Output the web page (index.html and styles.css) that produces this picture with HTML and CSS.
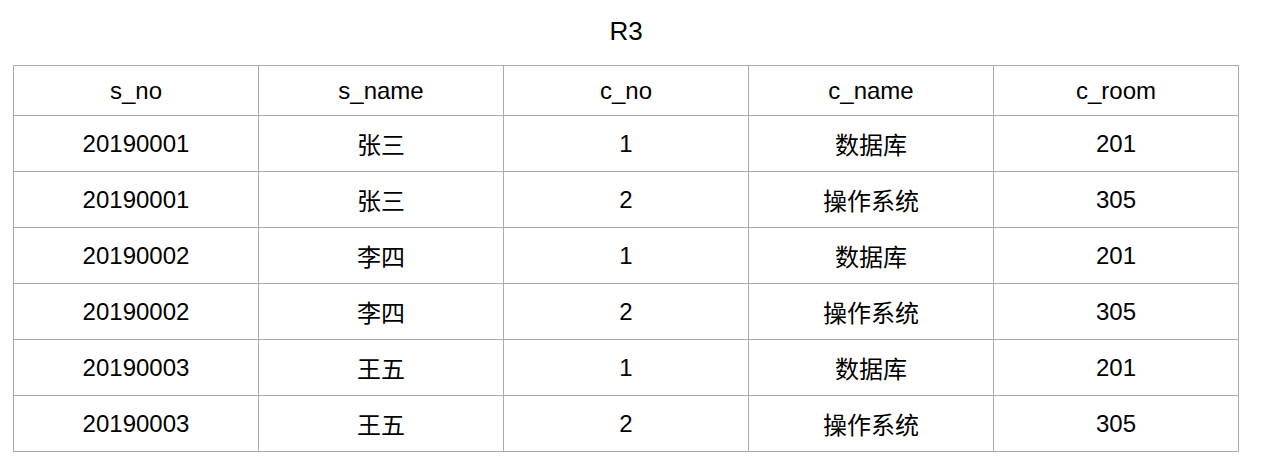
FILE: index.html
```html
<!DOCTYPE html>
<html lang="zh">
<head>
<meta charset="utf-8">
<title>R3</title>
<link rel="stylesheet" href="styles.css">
</head>
<body>
<div class="page">
  <div class="title">R3</div>
  <table class="grid">
    <thead>
      <tr class="head"><th>s_no</th><th>s_name</th><th>c_no</th><th>c_name</th><th>c_room</th></tr>
    </thead>
    <tbody>
      <tr><td>20190001</td><td>张三</td><td>1</td><td>数据库</td><td>201</td></tr>
      <tr><td>20190001</td><td>张三</td><td>2</td><td>操作系统</td><td>305</td></tr>
      <tr><td>20190002</td><td>李四</td><td>1</td><td>数据库</td><td>201</td></tr>
      <tr><td>20190002</td><td>李四</td><td>2</td><td>操作系统</td><td>305</td></tr>
      <tr><td>20190003</td><td>王五</td><td>1</td><td>数据库</td><td>201</td></tr>
      <tr><td>20190003</td><td>王五</td><td>2</td><td>操作系统</td><td>305</td></tr>
    </tbody>
  </table>
</div>
</body>
</html>
```

FILE: styles.css
```css
html, body {
  margin: 0;
  padding: 0;
  background: #ffffff;
}
body {
  font-family: "Liberation Sans", Arial, "Noto Sans CJK SC", sans-serif;
  color: #000000;
}
.page {
  padding: 16px 25px 0 13px;
  width: 1226px;
}
.title {
  font-size: 26px;
  line-height: 30px;
  text-align: center;
  margin-bottom: 19px;
}
.grid {
  width: 1226px;
  border-collapse: collapse;
  table-layout: fixed;
}
.grid th, .grid td {
  border: 1px solid #aaaaaa;
  font-size: 24px;
  font-weight: normal;
  text-align: center;
  vertical-align: middle;
  padding: 0;
}
.grid th {
  height: 49px;
}
.grid td {
  height: 55px;
}
```
